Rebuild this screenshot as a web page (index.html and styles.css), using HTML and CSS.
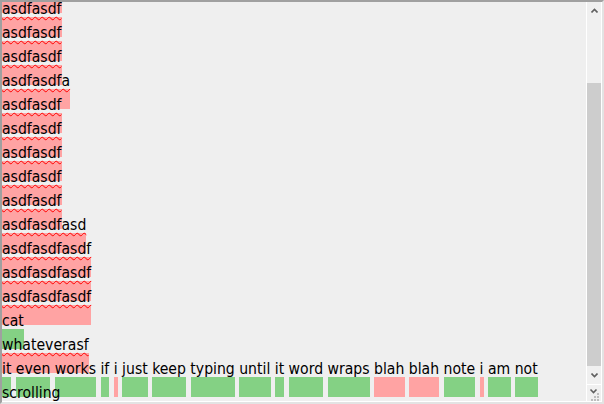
FILE: index.html
```html
<!DOCTYPE html>
<html lang="en">
<head>
  <meta charset="UTF-8">
  <title>Highlight textarea</title>
  <link rel="stylesheet" href="styles.css">
</head>
<body>
  <div class="frame">
    <div class="inner">
      <div class="editor">
        <div class="backdrop" aria-hidden="true">
          <div class="lines">
            <div><mark>asdfasdf</mark></div>
            <div><mark>asdfasdf</mark></div>
            <div><mark>asdfasdf</mark></div>
            <div><mark>asdfasdf</mark></div>
            <div><mark>asdfasdfa</mark></div>
            <div><mark>asdfasdf</mark></div>
            <div><mark>asdfasdf</mark></div>
            <div><mark>asdfasdf</mark></div>
            <div><mark>asdfasdf</mark></div>
            <div><mark>asdfasdf</mark></div>
            <div><mark>asdfasdfasd</mark></div>
            <div><mark>asdfasdfasdf</mark></div>
            <div><mark>asdfasdfasdf</mark></div>
            <div><mark>asdfasdfasdf</mark></div>
            <div><mark class="ok">cat</mark></div>
            <div><mark>whateverasf</mark></div>
            <div><mark class="ok">it</mark> <mark class="ok">even</mark> <mark class="ok">works</mark> <mark class="ok">if</mark> <mark>i</mark> <mark class="ok">just</mark> <mark class="ok">keep</mark> <mark class="ok">typing</mark> <mark class="ok">until</mark> <mark class="ok">it</mark> <mark class="ok">word</mark> <mark class="ok">wraps</mark> <mark>blah</mark> <mark>blah</mark> <mark class="ok">note</mark> <mark>i</mark> <mark class="ok">am</mark> <mark class="ok">not</mark> <mark class="ok">scrolling</mark></div>
          </div>
        </div>
        <div class="text">
          <div class="lines">
            <div><span class="typo">asdfasdf</span></div>
            <div><span class="typo">asdfasdf</span></div>
            <div><span class="typo">asdfasdf</span></div>
            <div><span class="typo">asdfasdf</span></div>
            <div><span class="typo">asdfasdfa</span></div>
            <div><span class="typo">asdfasdf</span></div>
            <div><span class="typo">asdfasdf</span></div>
            <div><span class="typo">asdfasdf</span></div>
            <div><span class="typo">asdfasdf</span></div>
            <div><span class="typo">asdfasdf</span></div>
            <div><span class="typo">asdfasdfasd</span></div>
            <div><span class="typo">asdfasdfasdf</span></div>
            <div><span class="typo">asdfasdfasdf</span></div>
            <div><span class="typo">asdfasdfasdf</span></div>
            <div>cat</div>
            <div><span class="typo">whateverasf</span></div>
            <div>it even works if i just keep typing until it word wraps blah blah note i am not scrolling</div>
          </div>
        </div>
      </div>

      <div class="scrollbar">
        <div class="arrow">
          <svg width="7" height="5" viewBox="0 0 7 5"><polyline points="0.5,4.5 3.5,1.5 6.5,4.5" fill="none" stroke="#606060" stroke-width="1.6"/></svg>
        </div>
        <div class="track"><div class="thumb"></div></div>
        <div class="arrow">
          <svg width="7" height="5" viewBox="0 0 7 5"><polyline points="0.5,0.5 3.5,3.5 6.5,0.5" fill="none" stroke="#606060" stroke-width="1.6"/></svg>
        </div>
        <div class="corner">
          <svg width="14" height="16" viewBox="0 0 14 16">
            <polyline points="3.5,4.5 6.5,7.5 9.5,4.5" fill="none" stroke="#606060" stroke-width="1.6"/>
            <rect x="10" y="8" width="2" height="2" fill="#bdbdbd"/>
            <rect x="7" y="11" width="2" height="2" fill="#bdbdbd"/>
            <rect x="10" y="11" width="2" height="2" fill="#bdbdbd"/>
            <rect x="4" y="14" width="2" height="2" fill="#bdbdbd"/>
            <rect x="7" y="14" width="2" height="2" fill="#bdbdbd"/>
            <rect x="10" y="14" width="2" height="2" fill="#bdbdbd"/>
          </svg>
        </div>
      </div>
    </div>
  </div>
</body>
</html>
```

FILE: styles.css
```css
body {
  margin: 0;
  background: #ffffff;
}

.frame {
  width: 604px;
  height: 404px;
  box-sizing: border-box;
  border: 2px solid;
  border-color: #a0a0a0 #e3e3e3 #e3e3e3 #a0a0a0;
}

.inner {
  height: 100%;
  box-sizing: border-box;
  border-right: 1px solid #ffffff;
  border-bottom: 1px solid #ffffff;
  background: #efefef;
  display: flex;
}

.editor {
  flex: 1;
  position: relative;
  overflow: hidden;
  font-family: "DejaVu Sans Condensed", "DejaVu Sans", sans-serif;
  font-stretch: condensed;
  font-size: 15.6px;
  line-height: 24px;
  color: #000000;
}

.lines {
  margin-top: -29px;
}

.backdrop {
  position: absolute;
  top: 18px;
  left: 0;
  right: 0;
  color: transparent;
}

.backdrop mark {
  background: #ffa3a3;
  color: transparent;
  padding: 1px 0;
}

.backdrop mark.ok {
  background: #84d184;
}

.text {
  position: relative;
}

.typo {
  text-decoration: underline wavy #ff0000;
  text-decoration-thickness: 1px;
  text-decoration-skip-ink: none;
  text-underline-offset: 2px;
}

.scrollbar {
  width: 14px;
  border-left: 1px solid #ffffff;
  background: #f0f0f0;
  display: flex;
  flex-direction: column;
}

.arrow {
  height: 17px;
  display: flex;
  align-items: center;
  justify-content: center;
}

.track {
  flex: 1;
}

.thumb {
  margin-top: 64px;
  height: 283px;
  background: #cdcdcd;
}

.corner {
  height: 16px;
  border-top: 1px solid #ffffff;
  display: flex;
}
```
